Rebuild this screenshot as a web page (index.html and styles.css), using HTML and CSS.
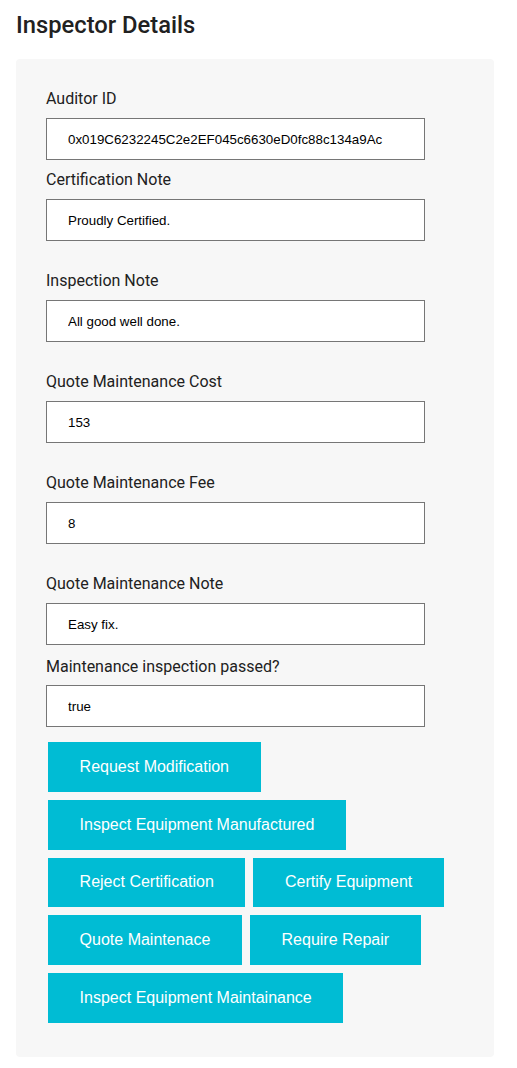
FILE: index.html
```html
<!DOCTYPE html>
<html lang="en">
<head>
<meta charset="utf-8">
<title>Inspector Details</title>
<link rel="stylesheet" href="styles.css">
</head>
<body>
<h1 class="title">Inspector Details</h1>
<div class="panel">
  <div class="field">
    <label class="label">Auditor ID</label>
    <input class="input" type="text" value="0x019C6232245C2e2EF045c6630eD0fc88c134a9Ac" readonly>
  </div>
  <div class="field field-tight">
    <label class="label">Certification Note</label>
    <input class="input" type="text" value="Proudly Certified." readonly>
  </div>
  <div class="field field-loose">
    <label class="label">Inspection Note</label>
    <input class="input" type="text" value="All good well done." readonly>
  </div>
  <div class="field field-loose">
    <label class="label">Quote Maintenance Cost</label>
    <input class="input" type="text" value="153" readonly>
  </div>
  <div class="field field-loose">
    <label class="label">Quote Maintenance Fee</label>
    <input class="input" type="text" value="8" readonly>
  </div>
  <div class="field field-loose">
    <label class="label">Quote Maintenance Note</label>
    <input class="input" type="text" value="Easy fix." readonly>
  </div>
  <div class="field field-last">
    <label class="label">Maintenance inspection passed?</label>
    <input class="input" type="text" value="true" readonly>
  </div>
  <div class="actions">
    <button class="btn">Request Modification</button>
    <button class="btn">Inspect Equipment Manufactured</button>
    <button class="btn">Reject Certification</button>
    <button class="btn">Certify Equipment</button>
    <button class="btn">Quote Maintenace</button>
    <button class="btn">Require Repair</button>
    <button class="btn">Inspect Equipment Maintainance</button>
  </div>
</div>
</body>
</html>
```
FILE: styles.css
```css
html, body {
  margin: 0;
  padding: 0;
  background: #ffffff;
}

body {
  padding: 11px 23px 0 16px;
  font-family: Roboto, "Liberation Sans", Arial, sans-serif;
  color: #212121;
}

.title {
  margin: 0 0 20px 0;
  font-size: 23.75px;
  line-height: 28px;
  font-weight: 500;
  color: #212121;
}

.panel {
  width: 478px;
  box-sizing: border-box;
  background: #f7f7f7;
  border-radius: 4px;
  padding: 30px 30px 34px 30px;
}

.field {
  display: flex;
  flex-direction: column;
  align-items: flex-start;
}

.field-tight {
  margin-top: 10px;
}

.field-loose {
  margin-top: 30px;
}

.field-last {
  margin-top: 12px;
}

.label {
  display: block;
  font-size: 16px;
  line-height: 19px;
  margin-bottom: 10px;
  color: #212121;
}

.field-last .label {
  margin-bottom: 9px;
}

.input {
  box-sizing: border-box;
  width: 379px;
  height: 42px;
  margin: 0;
  padding: 0 21px;
  border: 1px solid #767676;
  border-radius: 0;
  background: #ffffff;
  font-family: "Liberation Sans", Arial, sans-serif;
  font-size: 13.333px;
  color: #000000;
  outline: none;
}

.actions {
  display: flex;
  flex-wrap: wrap;
  gap: 8px;
  margin-top: 15px;
  padding-left: 2px;
}

.btn {
  height: 49.75px;
  padding: 0 31.6px;
  margin: 0;
  border: none;
  border-radius: 0;
  background: #00bcd4;
  color: #ffffff;
  font-family: "Liberation Sans", Arial, sans-serif;
  font-size: 16px;
  line-height: 18px;
  cursor: pointer;
}
```
